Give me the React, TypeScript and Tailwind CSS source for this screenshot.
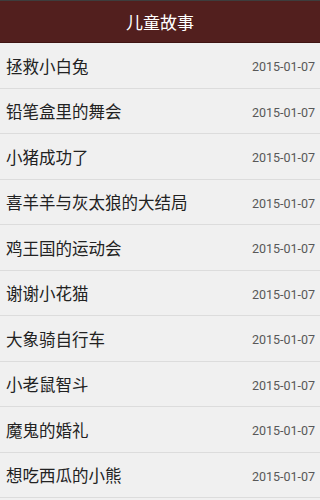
import React from "react";

const items = [
  "拯救小白兔",
  "铅笔盒里的舞会",
  "小猪成功了",
  "喜羊羊与灰太狼的大结局",
  "鸡王国的运动会",
  "谢谢小花猫",
  "大象骑自行车",
  "小老鼠智斗",
  "魔鬼的婚礼",
  "想吃西瓜的小熊",
];

export default function App() {
  return (
    <div className="w-[320px] h-[500px] overflow-hidden bg-[#f0f0f0] flex flex-col">
      <div className="h-[1px] bg-[#3d3d3d]" />
      <div className="h-[42px] bg-[#521f1e] flex items-center justify-center border-b border-[#3f1413]">
        <span
          className="text-white text-[17px]"
          style={{ fontFamily: '"Noto Sans CJK SC", sans-serif' }}
        >
          儿童故事
        </span>
      </div>
      {items.map((t) => (
        <div
          key={t}
          className="h-[45.5px] shrink-0 flex items-center justify-between pl-[6px] pr-[5px] pt-[2px] border-b border-[#dcdcdc]"
        >
          <span
            className="text-[#222222] text-[16.5px]"
            style={{ fontFamily: '"Noto Sans CJK SC", sans-serif' }}
          >
            {t}
          </span>
          <span
            className="text-[#585858] text-[12.5px] pt-[3px]"
            style={{ fontFamily: 'Roboto, sans-serif' }}
          >
            2015-01-07
          </span>
        </div>
      ))}
    </div>
  );
}
